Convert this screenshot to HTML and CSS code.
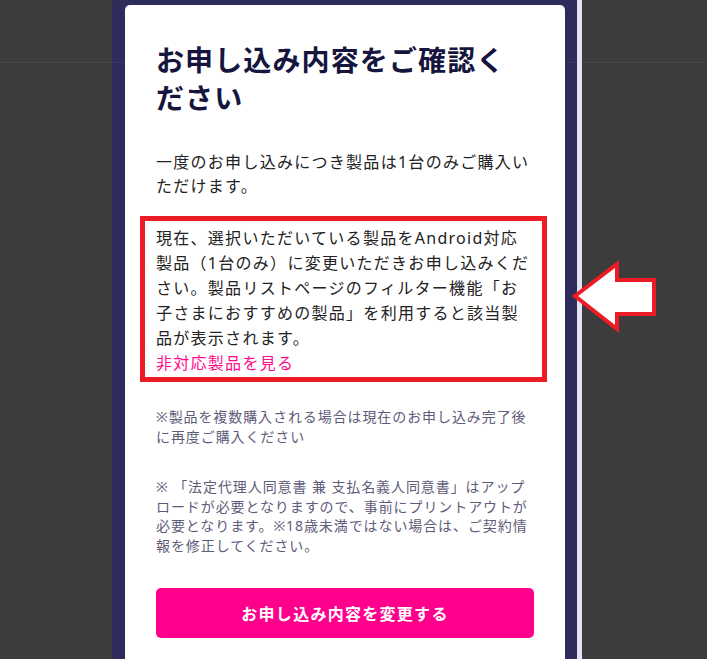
FILE: index.html
```html
<!DOCTYPE html>
<html lang="ja">
<head>
<meta charset="utf-8">
<title>お申し込み内容をご確認ください</title>
<link rel="stylesheet" href="styles.css">
</head>
<body>
<div class="stage">
  <div class="side"></div>
  <div class="backdrop">
    <div class="modal">
      <h1 class="title">お申し込み内容をご確認ください</h1>
      <p class="lead">一度のお申し込みにつき製品は1台のみご購入いただけます。</p>
      <div class="notice">
        <p class="notice-text">現在、選択いただいている製品をAndroid対応製品（1台のみ）に変更いただきお申し込みください。製品リストページのフィルター機能「お子さまにおすすめの製品」を利用すると該当製品が表示されます。</p>
        <a class="notice-link" href="#">非対応製品を見る</a>
      </div>
      <p class="note note-first">※製品を複数購入される場合は現在のお申し込み完了後に再度ご購入ください</p>
      <p class="note note-second">※ 「法定代理人同意書 兼 支払名義人同意書」はアップロードが必要となりますので、事前にプリントアウトが必要となります。※18歳未満ではない場合は、ご契約情報を修正してください。</p>
      <button class="primary" type="button">お申し込み内容を変更する</button>
    </div>
  </div>
  <div class="rail"></div>
  <div class="side side-right"></div>
</div>
<svg class="arrow" width="90" height="76" viewBox="0 0 90 76" aria-hidden="true">
  <polygon points="5,37 47,5 47,21 84,21 84,55 47,55 47,70" fill="#ffffff" stroke="#ed1c24" stroke-width="4" stroke-linejoin="miter" stroke-miterlimit="6"/>
</svg>
</body>
</html>
```

FILE: styles.css
```css
* {
  box-sizing: border-box;
}

html, body {
  margin: 0;
  padding: 0;
  height: 659px;
  overflow: hidden;
}

body {
  font-family: "Noto Sans", "Noto Sans CJK JP", sans-serif;
  background: #3c3c3c;
  position: relative;
}

.stage {
  display: flex;
  height: 659px;
}

.side {
  width: 112px;
  flex: none;
  background:
    linear-gradient(to bottom, transparent 62px, rgba(255, 255, 255, 0.05) 62px, rgba(255, 255, 255, 0.05) 63px, transparent 63px),
    #3c3c3c;
}

.side-right {
  flex: 1;
  width: auto;
}

.backdrop {
  width: 465px;
  flex: none;
  padding: 5px 12px 0 13px;
  background:
    linear-gradient(to bottom, transparent 62px, rgba(255, 255, 255, 0.05) 62px, rgba(255, 255, 255, 0.05) 63px, transparent 63px),
    #2e2c5a;
}

.rail {
  width: 5px;
  flex: none;
  background: #e4e4f1;
}

.modal {
  background: #ffffff;
  border-radius: 5px 5px 0 0;
  padding: 36px 31px 0 31px;
  height: 660px;
  display: flex;
  flex-direction: column;
}

.title {
  margin: 0 0 33px 0;
  padding-right: 10px;
  font-size: 28px;
  line-height: 38px;
  font-weight: 700;
  letter-spacing: 0.04em;
  color: #15153d;
}

.lead {
  margin: 0;
  font-size: 16px;
  line-height: 24px;
  letter-spacing: 0.08em;
  color: #222222;
}

.notice {
  position: relative;
  margin-top: 28px;
  font-size: 16px;
  line-height: 25px;
  letter-spacing: 0.08em;
}

.notice::after {
  content: "";
  position: absolute;
  top: -10px;
  right: -13px;
  bottom: -6px;
  left: -16px;
  border: 5px solid #ec1c24;
  pointer-events: none;
}

.notice-text {
  margin: 0;
  color: #222222;
}

.notice-link {
  display: block;
  color: #ff0a8c;
  text-decoration: none;
}

.note {
  margin: 0;
  font-size: 14px;
  line-height: 19.6px;
  letter-spacing: 0.065em;
  color: #5e5c7a;
}

.note-first {
  margin-top: 31px;
}

.note-second {
  margin-top: 31px;
}

.primary {
  margin-top: 32px;
  height: 50px;
  width: 100%;
  border: 0;
  border-radius: 5px;
  background: #ff008c;
  color: #ffffff;
  font-family: "Noto Sans", "Noto Sans CJK JP", sans-serif;
  font-size: 16px;
  font-weight: 700;
  letter-spacing: 0.08em;
  cursor: pointer;
}

.arrow {
  position: absolute;
  left: 570px;
  top: 259px;
}
```
